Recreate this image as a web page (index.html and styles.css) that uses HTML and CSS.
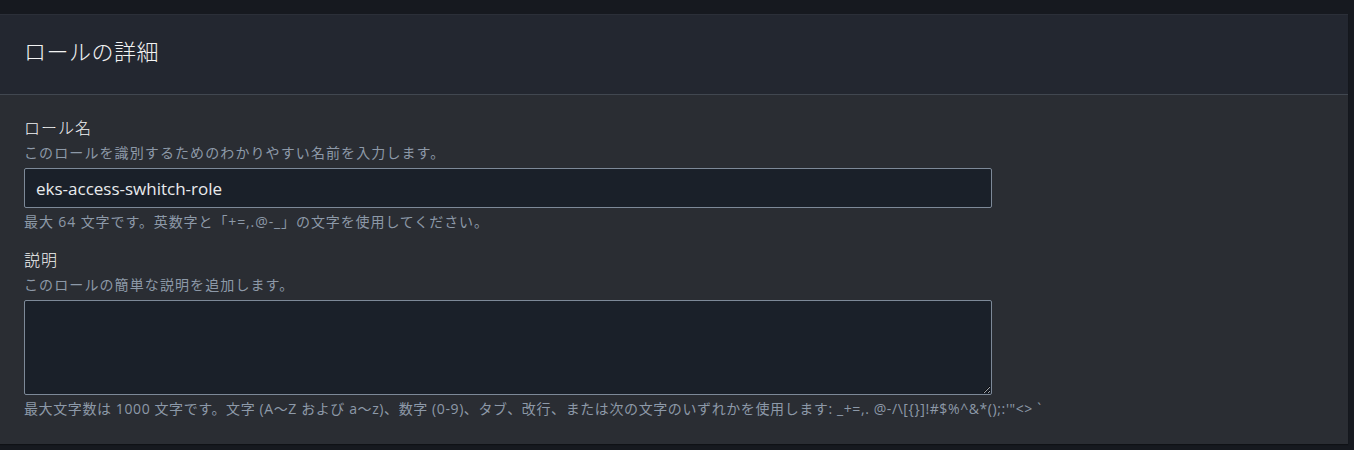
FILE: index.html
```html
<!DOCTYPE html>
<html lang="ja">
<head>
<meta charset="utf-8">
<link rel="stylesheet" href="styles.css">
</head>
<body>
<div class="page">
  <section class="card">
    <header class="card-header">
      <h2 class="card-title">ロールの詳細</h2>
    </header>
    <div class="card-body">
      <div class="field">
        <div class="label">ロール名</div>
        <div class="desc">このロールを識別するためのわかりやすい名前を入力します。</div>
        <input class="input" type="text" value="eks-access-swhitch-role">
        <div class="hint hint-short">最大 64 文字です。英数字と「+=,.@-_」の文字を使用してください。</div>
      </div>
      <div class="field">
        <div class="label">説明</div>
        <div class="desc">このロールの簡単な説明を追加します。</div>
        <textarea class="textarea"></textarea>
        <div class="hint">最大文字数は 1000 文字です。文字 (A～Z および a～z)、数字 (0-9)、タブ、改行、または次の文字のいずれかを使用します: _+=,. @-/\[{}]!#$%^&amp;*();:'"&lt;&gt; `</div>
      </div>
    </div>
  </section>
</div>
</body>
</html>
```
FILE: styles.css
```css
* { box-sizing: border-box; }
html, body {
  margin: 0;
  padding: 0;
  background: #16191f;
  height: 100%;
}
body {
  font-family: "Open Sans", "Noto Sans CJK JP", sans-serif;
  color: #e9ebed;
}
.page {
  padding: 14px 6px 0 0;
}
.card {
  background: #2a2d33;
  box-shadow: 0 1px 1px rgba(0,0,0,0.3);
}
.card-header {
  background: #232730;
  border-top: 1px solid #2b2f38;
  border-bottom: 1px solid #414750;
  padding: 16px 24px 23px;
}
.card-title {
  margin: 0;
  font-size: 22px;
  line-height: 40px;
  font-weight: 300;
  color: #f2f3f3;
  letter-spacing: 0.5px;
}
.card-body {
  padding: 21px 24px 24px;
  display: flex;
  flex-direction: column;
  gap: 15px;
}
.field {
  display: flex;
  flex-direction: column;
  align-items: flex-start;
}
.label {
  font-size: 16px;
  line-height: 24px;
  font-weight: 300;
  color: #f2f3f3;
  letter-spacing: 1px;
}
.desc {
  margin-top: 2px;
  font-size: 14px;
  line-height: 22px;
  color: #8d99a8;
  letter-spacing: 1.1px;
}
.input, .textarea {
  margin-top: 4px;
  width: 968px;
  background: #1a2029;
  border: 1px solid #7d8998;
  border-radius: 2px;
  color: #e9ebed;
  font-family: "Open Sans", sans-serif;
}
.input {
  height: 40px;
  padding: 0 11px;
  font-size: 17px;
}
.textarea {
  height: 95px;
  resize: vertical;
}
.hint {
  margin-top: 3px;
  font-size: 14px;
  line-height: 22px;
  color: #8d99a8;
  letter-spacing: 0.6px;
}
.hint-short {
  letter-spacing: 0.9px;
}
```
